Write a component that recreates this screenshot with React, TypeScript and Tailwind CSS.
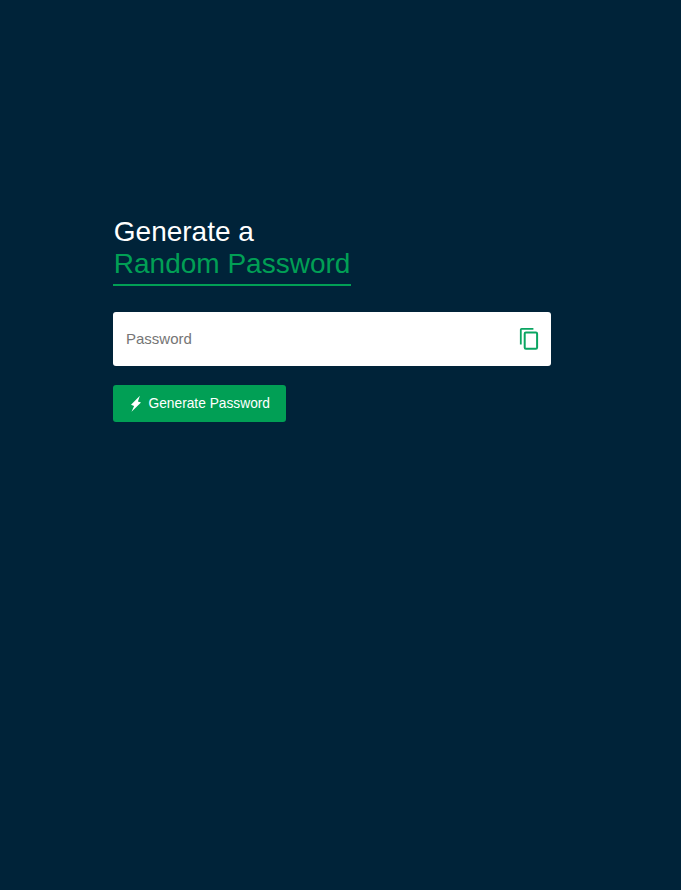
function CopyIcon() {
  return (
    <svg width="20" height="24" viewBox="0 0 20 24" fill="none" stroke="#0aa562">
      <path d="M1.8 17.4V2.6Q1.8 1.8 2.6 1.8H14.4" strokeWidth="1.8" />
      <rect x="5.7" y="5.6" width="12.4" height="16.2" rx="1.2" strokeWidth="2" />
    </svg>
  );
}

function BoltIcon() {
  return (
    <svg width="12" height="18" viewBox="0 0 12 18" fill="white">
      <path d="M9.9 0.8 L1 9.8 L4.1 11 L1.5 16.8 L11 7.5 L7.9 6.5 Z" />
    </svg>
  );
}

export default function App() {
  return (
    <main className="min-h-screen bg-[#002339] px-[113px] pt-[216px] font-['Liberation_Sans',Arial,sans-serif]">
      <div className="w-[438px]">
        <h1 className="text-[28px] leading-8 text-white">
          <span className="block pl-[0.8px]">Generate a</span>
          <span className="block h-[38px] w-[238px] whitespace-nowrap border-b-2 border-[#019f55] pl-[0.8px] text-[#019f55]">
            Random Password
          </span>
        </h1>
        <div className="mt-[26px] flex h-[54px] items-center justify-between rounded-[3px] bg-white pr-[12px] pl-[13px]">
          <input
            type="text"
            placeholder="Password"
            className="min-w-0 flex-1 text-[15px] text-[#222] outline-none placeholder:text-[#757575]"
          />
          <button type="button" aria-label="Copy">
            <CopyIcon />
          </button>
        </div>
        <button
          type="button"
          className="mt-[19px] flex h-[37px] w-[173px] items-center gap-[6.5px] rounded-[3px] bg-[#019f55] pl-[17px] text-[13.75px] whitespace-nowrap text-white"
        >
          <BoltIcon />
          <span className="pt-px leading-4">Generate Password</span>
        </button>
      </div>
    </main>
  );
}
